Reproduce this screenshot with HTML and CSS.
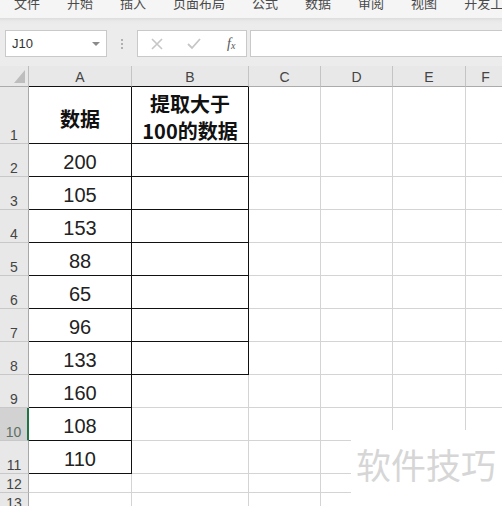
FILE: index.html
```html
<!DOCTYPE html>
<html lang="zh">
<head>
<meta charset="utf-8">
<title>Sheet</title>
<link rel="stylesheet" href="styles.css">
</head>
<body>
<div class="app">
  <div class="menubar">
    <span>文件</span><span>开始</span><span>插入</span><span>页面布局</span><span>公式</span><span>数据</span><span>审阅</span><span>视图</span><span>开发工具</span>
  </div>
  <div class="toolbar">
    <div class="namebox"><span>J10</span><span class="caret"></span></div>
    <div class="dots"><i></i><i></i><i></i></div>
    <div class="fxbox">
      <svg class="ico" width="14" height="14" viewBox="0 0 14 14"><path d="M2 2 L12 12 M12 2 L2 12" stroke="#c6c6c6" stroke-width="1.6" fill="none"/></svg>
      <svg class="ico" width="16" height="14" viewBox="0 0 16 14"><path d="M2 7 L6 11 L14 2" stroke="#c6c6c6" stroke-width="1.8" fill="none"/></svg>
      <span class="fx">f<sub>x</sub></span>
    </div>
    <div class="formula"></div>
  </div>
  <div class="sheet">
    <div class="corner"><span class="tri"></span></div>
    <div class="ch bkb">A</div><div class="ch bkb">B</div><div class="ch">C</div><div class="ch">D</div><div class="ch">E</div><div class="ch">F</div>

    <div class="rh">1</div><div class="c hd bkr bkb">数据</div><div class="c hd bkr bkb two">提取大于<br>100的数据</div><div class="c"></div><div class="c"></div><div class="c"></div><div class="c"></div>
    <div class="rh">2</div><div class="c n bkr bkb">200</div><div class="c bkr bkb"></div><div class="c"></div><div class="c"></div><div class="c"></div><div class="c"></div>
    <div class="rh">3</div><div class="c n bkr bkb">105</div><div class="c bkr bkb"></div><div class="c"></div><div class="c"></div><div class="c"></div><div class="c"></div>
    <div class="rh">4</div><div class="c n bkr bkb">153</div><div class="c bkr bkb"></div><div class="c"></div><div class="c"></div><div class="c"></div><div class="c"></div>
    <div class="rh">5</div><div class="c n bkr bkb">88</div><div class="c bkr bkb"></div><div class="c"></div><div class="c"></div><div class="c"></div><div class="c"></div>
    <div class="rh">6</div><div class="c n bkr bkb">65</div><div class="c bkr bkb"></div><div class="c"></div><div class="c"></div><div class="c"></div><div class="c"></div>
    <div class="rh">7</div><div class="c n bkr bkb">96</div><div class="c bkr bkb"></div><div class="c"></div><div class="c"></div><div class="c"></div><div class="c"></div>
    <div class="rh">8</div><div class="c n bkr bkb">133</div><div class="c bkr bkb"></div><div class="c"></div><div class="c"></div><div class="c"></div><div class="c"></div>
    <div class="rh">9</div><div class="c n bkr bkb">160</div><div class="c"></div><div class="c"></div><div class="c"></div><div class="c"></div><div class="c"></div>
    <div class="rh sel">10</div><div class="c n bkr bkb">108</div><div class="c"></div><div class="c"></div><div class="c"></div><div class="c"></div><div class="c"></div>
    <div class="rh">11</div><div class="c n bkr bkb">110</div><div class="c"></div><div class="c"></div><div class="c"></div><div class="c"></div><div class="c"></div>
    <div class="rh sm">12</div><div class="c"></div><div class="c"></div><div class="c"></div><div class="c"></div><div class="c"></div><div class="c"></div>
    <div class="rh sm">13</div><div class="c"></div><div class="c"></div><div class="c"></div><div class="c"></div><div class="c"></div><div class="c"></div>
  </div>
  <div class="watermark">软件技巧</div>
</div>
</body>
</html>
```
FILE: styles.css
```css
* { box-sizing: border-box; }
html, body { margin: 0; padding: 0; }
body {
  width: 502px;
  height: 506px;
  overflow: hidden;
  background: #ffffff;
  font-family: "Liberation Sans", "Noto Sans CJK SC", sans-serif;
}
.app {
  position: relative;
  width: 502px;
  height: 506px;
  overflow: hidden;
}
.menubar {
  height: 18px;
  background: #f5f5f5;
  display: flex;
  gap: 27px;
  padding-left: 14px;
  font-family: "Noto Sans CJK SC", sans-serif;
  font-size: 13px;
  line-height: 13px;
  color: #4a4a4a;
  white-space: nowrap;
  overflow: hidden;
}
.menubar span { margin-top: -4px; }
.toolbar {
  height: 48px;
  background: linear-gradient(#dcdcdc 0px, #e9e9e9 3px, #ececec 6px, #ececec 100%);
  display: flex;
  align-items: flex-start;
  padding-top: 12px;
  padding-left: 5px;
}
.namebox {
  width: 102px;
  height: 27px;
  background: #fff;
  border: 1px solid #c9c9c9;
  display: flex;
  align-items: center;
  justify-content: space-between;
  padding: 0 6px 0 6px;
  font-size: 13px;
  color: #333;
}
.caret {
  width: 0; height: 0;
  border-left: 4px solid transparent;
  border-right: 4px solid transparent;
  border-top: 4px solid #8a8a8a;
  margin-right: 0px;
}
.dots {
  width: 30px;
  height: 27px;
  display: flex;
  flex-direction: column;
  align-items: center;
  justify-content: center;
  gap: 2px;
}
.dots i {
  display: block;
  width: 2px;
  height: 2px;
  background: #b0b0b0;
}
.fxbox {
  width: 110px;
  height: 27px;
  background: #fff;
  border: 1px solid #c9c9c9;
  display: flex;
  align-items: center;
  padding-left: 12px;
  gap: 22px;
}
.fx {
  font-family: "Liberation Serif", serif;
  font-style: italic;
  font-size: 14px;
  color: #555;
  margin-left: 3px;
}
.fx sub { font-size: 10px; vertical-align: -1px; }
.formula {
  flex: 1;
  margin-left: 3px;
  height: 27px;
  background: #fff;
  border: 1px solid #c9c9c9;
  border-right: none;
}
.sheet {
  display: grid;
  grid-template-columns: 29px 103px 117px 72px 72px 73px 40px;
  grid-template-rows: 21px 57px repeat(10, 33px) 19px 19px;
}
.corner {
  background: #e8e8e8;
  border-right: 1px solid #bdbdbd;
  border-bottom: 1px solid #ababab;
  position: relative;
}
.tri {
  position: absolute;
  right: 3px;
  bottom: 3px;
  width: 0; height: 0;
  border-left: 11px solid transparent;
  border-bottom: 13px solid #bdbdbd;
}
.ch {
  background: #e8e8e8;
  border-right: 1px solid #c4c4c4;
  border-bottom: 1px solid #ababab;
  display: flex;
  align-items: flex-end;
  justify-content: center;
  padding-bottom: 1px;
  font-size: 14px;
  color: #444;
}
.ch.bkb { border-bottom-color: #111; }
.rh {
  background: #e8e8e8;
  border-right: 1px solid #a8a8a8;
  border-bottom: 1px solid #c8c8c8;
  display: flex;
  align-items: flex-end;
  justify-content: center;
  font-size: 14px;
  line-height: 16px;
  color: #444;
  padding-bottom: 0px;
}
.rh.sm { line-height: 16px; }
.rh.sel {
  background: #d2d2d2;
  border-right: 2px solid #217346;
  color: #5d6f66;
}
.c {
  border-right: 1px solid #d4d4d4;
  border-bottom: 1px solid #d4d4d4;
  background: #fff;
  display: flex;
  align-items: center;
  justify-content: center;
  color: #222;
}
.c.bkr { border-right-color: #111; }
.c.bkb { border-bottom-color: #111; }
.c.n {
  font-size: 20px;
  padding-top: 4px;
}
.c.hd {
  font-family: "Noto Sans CJK SC", sans-serif;
  font-weight: bold;
  font-size: 20px;
  line-height: 27px;
  text-align: center;
  padding-top: 6px;
  color: #111;
}
.c.hd.two { padding-top: 4px; }
.watermark {
  position: absolute;
  left: 351px;
  top: 430px;
  right: 0;
  bottom: 0;
  background: #fff;
  font-family: "Noto Sans CJK SC", sans-serif;
  font-size: 35px;
  color: #d6d6d6;
  padding-left: 5px;
  padding-top: 14px;
  line-height: 40px;
  letter-spacing: 0px;
  white-space: nowrap;
}
```
